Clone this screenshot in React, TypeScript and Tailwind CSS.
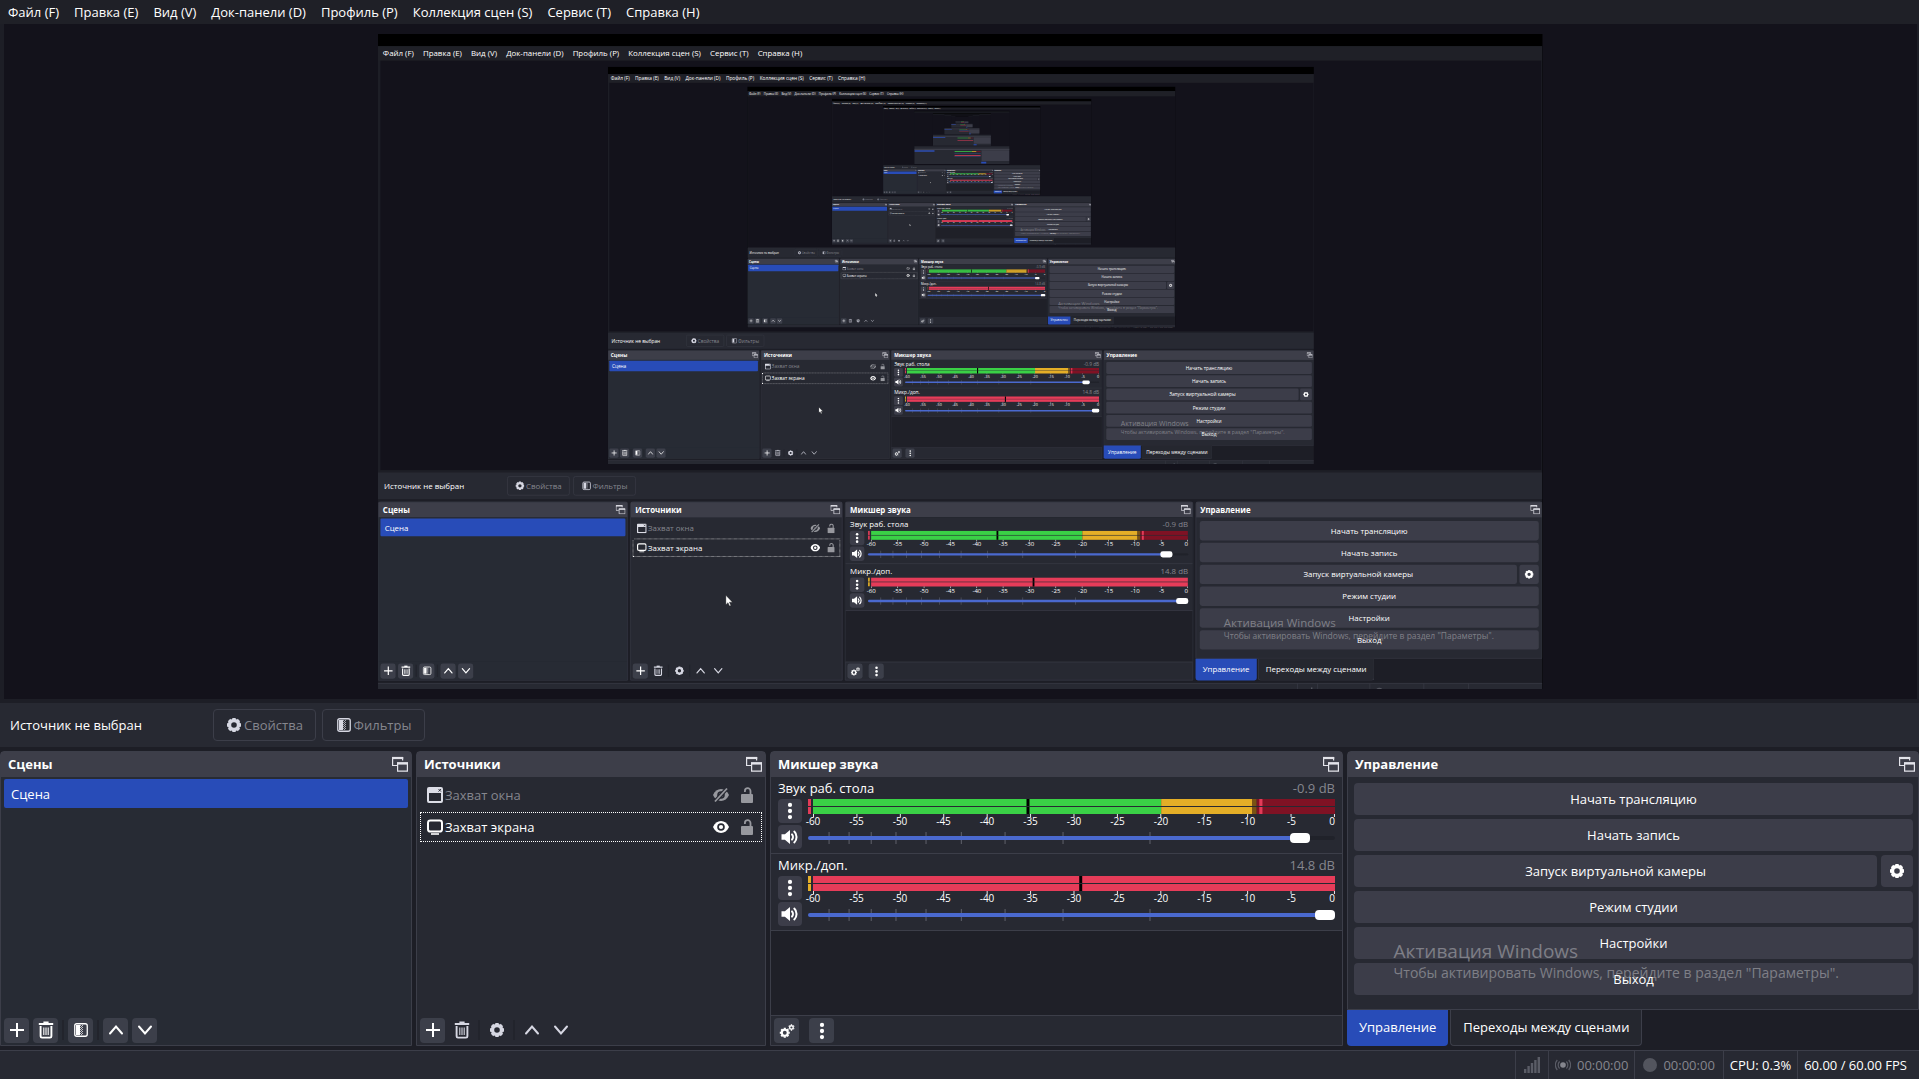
import { useId, useLayoutEffect, useRef, useState, type ReactNode } from "react";

const SCREEN_W = 1920;
const SCREEN_H = 1080;
const MAX_DEPTH = 5;

const MENU = [
  "Файл (F)",
  "Правка (E)",
  "Вид (V)",
  "Док-панели (D)",
  "Профиль (P)",
  "Коллекция сцен (S)",
  "Сервис (T)",
  "Справка (H)",
];

const DB_LABELS = [-60, -55, -50, -45, -40, -35, -30, -25, -20, -15, -10, -5, 0];
const VOLUME_TICKS = [3.9, 7.7, 11.9, 16.6, 22.3, 29, 37.3, 48.3, 64.8];

// peak hold position of the desktop channel, one entry per mirrored frame
const DESKTOP_HOLD = [40.9, 39.6, 36.5];

/* ---------- icons ---------- */

function GearIcon({ className = "size-4" }: { className?: string }) {
  return (
    <svg viewBox="0 0 16 16" className={className} stroke="currentColor" fill="none" aria-hidden="true">
      <circle cx="8" cy="8" r="4.5" strokeWidth="3.4" />
      {[0, 45, 90, 135].map((a) => (
        <g key={a} transform={`rotate(${a} 8 8)`} strokeWidth="3.4">
          <path d="M8 1v2M8 13v2" />
        </g>
      ))}
    </svg>
  );
}

function GearsIcon() {
  return (
    <svg viewBox="0 0 18 18" className="size-4" stroke="currentColor" fill="none" aria-hidden="true">
      <circle cx="6.5" cy="11" r="3.4" strokeWidth="2.4" />
      {[0, 45, 90, 135].map((a) => (
        <path key={a} transform={`rotate(${a} 6.5 11)`} strokeWidth="2.4" d="M6.5 5.4v1.6M6.5 15v1.6" />
      ))}
      <circle cx="14" cy="5" r="2" strokeWidth="1.6" />
      {[0, 60, 120].map((a) => (
        <path key={a} transform={`rotate(${a} 14 5)`} strokeWidth="1.5" d="M14 1.4v1.2M14 7.4v1.2" />
      ))}
    </svg>
  );
}

function FilterIcon() {
  return (
    <svg viewBox="0 0 16 16" className="size-4" fill="currentColor" aria-hidden="true">
      <rect x="1.75" y="1.75" width="12.5" height="12.5" rx="2" fill="none" stroke="currentColor" strokeWidth="1.3" />
      <path d="M3 3h4v10H3z" />
      {[3, 5, 7, 9, 11].map((y) => (
        <path key={y} d={`M7 ${y}h1v1H7zM8 ${y + 1}h1v1H8zM9 ${y}h1v1H9z`} opacity=".7" />
      ))}
    </svg>
  );
}

function FloatIcon() {
  return (
    <svg viewBox="0 0 16 16" className="size-4" fill="none" stroke="currentColor" aria-hidden="true">
      <path d="M5 9.5H.6V1.5h10v3" strokeWidth="1.2" />
      <path d="M0 2h11.2" strokeWidth="2.2" />
      <path d="M5.6 7h9.8v8.2H5.6z" strokeWidth="1.2" />
      <path d="M5 7.4h11" strokeWidth="2.4" />
    </svg>
  );
}

function TrashIcon() {
  return (
    <svg viewBox="0 0 16 18" className="h-[18px] w-4" fill="none" stroke="currentColor" aria-hidden="true">
      <path d="M.8 3h14.4M5.4 1.4h5.2" strokeWidth="2" />
      <path d="M2.6 5v10.2a1.4 1.4 0 0 0 1.4 1.4h8a1.4 1.4 0 0 0 1.4-1.4V5" strokeWidth="1.9" />
      <path d="M5.8 6.5v7.5M8 6.5v7.5M10.2 6.5v7.5" strokeWidth="1.1" />
    </svg>
  );
}

function PlusIcon() {
  return (
    <svg viewBox="0 0 16 16" className="size-4" stroke="currentColor" strokeWidth="2" aria-hidden="true">
      <path d="M8 1v14M1 8h14" />
    </svg>
  );
}

function ChevronIcon({ down }: { down?: boolean }) {
  return (
    <svg viewBox="0 0 16 16" className="size-4" fill="none" stroke="currentColor" strokeWidth="2" strokeLinecap="round" aria-hidden="true">
      <path d={down ? "M2 4.5l6 7 6-7" : "M2 11.5l6-7 6 7"} />
    </svg>
  );
}

function DotsIcon() {
  return (
    <svg viewBox="0 0 16 16" className="size-[18px]" fill="currentColor" aria-hidden="true">
      <circle cx="8" cy="2.6" r="1.9" />
      <circle cx="8" cy="8" r="1.9" />
      <circle cx="8" cy="13.4" r="1.9" />
    </svg>
  );
}

function SpeakerIcon() {
  return (
    <svg viewBox="0 0 18 16" className="h-4 w-[18px]" aria-hidden="true">
      <path d="M.5 5.2h3.4L9 1v14L3.9 10.8H.5z" fill="currentColor" />
      <path d="M11 5.4c1.3 1.4 1.3 3.8 0 5.2M13.3 2.6c3 2.8 3 8 0 10.8" fill="none" stroke="currentColor" strokeWidth="2" strokeLinecap="round" />
    </svg>
  );
}

function WindowIcon() {
  return (
    <svg viewBox="0 0 16 16" className="size-4" aria-hidden="true">
      <path fillRule="evenodd" fill="#dcdde6" d="M2 0h12a2 2 0 0 1 2 2v12a2 2 0 0 1-2 2H2a2 2 0 0 1-2-2V2a2 2 0 0 1 2-2zM2 6v7.4c0 .4.2.6.6.6h10.8c.4 0 .6-.2.6-.6V6z" />
      <path d="M11.5 2l2.5 2.6M14 2l-2.5 2.6" stroke="#272932" strokeWidth=".9" />
    </svg>
  );
}

function MonitorIcon() {
  return (
    <svg viewBox="0 0 16 16" className="size-4" fill="none" stroke="#fff" strokeWidth="2" aria-hidden="true">
      <rect x="1" y="1.6" width="14" height="11" rx="2.4" />
      <path d="M4 15h8" strokeWidth="1.6" />
    </svg>
  );
}

function EyeIcon({ off }: { off?: boolean }) {
  return (
    <svg viewBox="0 0 16 16" className="size-4" aria-hidden="true">
      <path d="M0 8c1.6-3.8 4.6-6 8-6s6.4 2.2 8 6c-1.6 3.8-4.6 6-8 6s-6.4-2.2-8-6z" fill="currentColor" />
      <circle cx="8" cy="8" r="3.8" fill="#272932" />
      <circle cx="8" cy="8" r="2.1" fill="currentColor" />
      {off && <path d="M1.5 15L14.5 1" stroke="#272932" strokeWidth="4" />}
      {off && <path d="M2 14.5L14 1.5" stroke="currentColor" strokeWidth="1.8" />}
    </svg>
  );
}

function UnlockIcon() {
  return (
    <svg viewBox="0 0 12 16" className="h-4 w-3" aria-hidden="true">
      <rect x="0" y="7" width="12" height="9" rx="1" fill="currentColor" />
      <path d="M9.5 7.5V4a2.8 2.8 0 0 0-5.6 0v1" fill="none" stroke="currentColor" strokeWidth="1.8" />
    </svg>
  );
}

/* ---------- shared bits ---------- */

function Dock({ title, children }: { title: string; children: ReactNode }) {
  return (
    <section className="flex min-h-0 min-w-0 flex-1 flex-col rounded-t border border-[#3c3e49] bg-[#272932]">
      <header className="flex h-[25px] shrink-0 items-center justify-between bg-[#3d3e49] pr-[3px] pb-0.5 pl-[7px]">
        <h2 className="font-bold">{title}</h2>
        <button type="button" aria-label={`Открепить: ${title}`} className="text-[#e3e3ea]">
          <FloatIcon />
        </button>
      </header>
      {children}
    </section>
  );
}

function ToolButton({ label, flat, children }: { label: string; flat?: boolean; children: ReactNode }) {
  return (
    <button
      type="button"
      aria-label={label}
      className={
        flat
          ? "flex size-[25px] items-center justify-center rounded text-[#d6d7e2]"
          : "flex size-[25px] items-center justify-center rounded bg-[#3c3f4a] text-white"
      }
    >
      {children}
    </button>
  );
}

function Separator() {
  return <span className="h-5 w-0.5 bg-[#22242c]" />;
}

/* ---------- docks ---------- */

function ScenesDock() {
  return (
    <Dock title="Сцены">
      <ul className="flex-1 bg-[#272b34] px-[3px] py-0.5">
        <li className="flex h-[29px] items-center rounded-xs bg-[#284cb8] px-[7px]">Сцена</li>
      </ul>
      <div className="flex h-[30px] items-center gap-1 bg-[#272b34] px-[3px]">
        <ToolButton label="Добавить сцену"><PlusIcon /></ToolButton>
        <ToolButton label="Удалить сцену"><TrashIcon /></ToolButton>
        <Separator />
        <ToolButton label="Фильтры сцены"><FilterIcon /></ToolButton>
        <Separator />
        <ToolButton label="Сцену вверх"><ChevronIcon /></ToolButton>
        <ToolButton label="Сцену вниз"><ChevronIcon down /></ToolButton>
      </div>
    </Dock>
  );
}

function SourceRow({ name, icon, visible }: { name: string; icon: ReactNode; visible?: boolean }) {
  return (
    <li
      className={
        visible
          ? "flex h-[30px] items-center gap-0.5 border border-dotted border-white pr-2 pl-1.5"
          : "flex h-[30px] items-center gap-0.5 border border-transparent pr-2 pl-1.5 text-[#85868e]"
      }
    >
      {icon}
      <span className="flex-1">{name}</span>
      <button type="button" aria-label={`Видимость: ${name}`} className={visible ? "mr-2.5 text-white" : "mr-2.5 text-[#97989e]"}>
        <EyeIcon off={!visible} />
      </button>
      <button type="button" aria-label={`Блокировка: ${name}`} className="text-[#97989e]">
        <UnlockIcon />
      </button>
    </li>
  );
}

function SourcesDock() {
  return (
    <Dock title="Источники">
      <ul className="flex flex-1 flex-col gap-0.5 p-[3px]">
        <SourceRow name="Захват окна" icon={<WindowIcon />} />
        <SourceRow name="Захват экрана" icon={<MonitorIcon />} visible />
      </ul>
      <div className="flex h-[30px] items-center gap-1 px-[3px]">
        <ToolButton label="Добавить источник"><PlusIcon /></ToolButton>
        <ToolButton label="Удалить источник" flat><TrashIcon /></ToolButton>
        <Separator />
        <ToolButton label="Свойства источника" flat><GearIcon /></ToolButton>
        <Separator />
        <ToolButton label="Источник вверх" flat><ChevronIcon /></ToolButton>
        <ToolButton label="Источник вниз" flat><ChevronIcon down /></ToolButton>
      </div>
    </Dock>
  );
}

type Segment = { from: number; to: number; color: string };

type ChannelProps = {
  name: string;
  db: string;
  input: string;
  segments: Segment[];
  hold: number;
  volume: number;
};

function Channel({ name, db, input, segments, hold, volume }: ChannelProps) {
  const id = useId();

  return (
    <div className="border-b border-[#3c3e49] px-[7px] pt-px pb-1">
      <div className="flex h-[21px] items-start justify-between pt-0.5">
        <label htmlFor={id}>{name}</label>
        <span className="text-[#85868e]">{db}</span>
      </div>
      <div className="flex gap-1.5">
        <div className="flex flex-col gap-0.5">
          <button type="button" aria-label={`Параметры: ${name}`} className="flex size-6 items-center justify-center rounded bg-[#3c3d49]">
            <DotsIcon />
          </button>
          <button type="button" aria-label={`Заглушить: ${name}`} className="flex size-6 items-center justify-center rounded bg-[#3c3d49]">
            <SpeakerIcon />
          </button>
        </div>

        <div className="min-w-0 flex-1">
          {/* Level meter */}
          <div className="flex gap-0.5">
            <svg className="h-[15px] w-[3px]">
              <rect width="3" height="7" fill={input} />
              <rect y="8" width="3" height="7" fill={input} />
            </svg>
            <div className="flex-1">
              <svg className="block h-[18px] w-full">
                {segments.map((s) => (
                  <rect key={s.from} x={`${s.from}%`} width={`${s.to - s.from}%`} height="15" fill={s.color} />
                ))}
                <rect x={`${hold}%`} width="3" height="15" fill="#000" />
                <rect y="7" width="100%" height="1" fill="#272932" />
                {DB_LABELS.map((v) => (
                  <rect key={v} x={`${((v + 60) / 60) * 99.8}%`} y="15" width="1" height="3" fill="#e8e8ee" />
                ))}
              </svg>
              <div className="flex h-2 items-center justify-between text-[10px] leading-none">
                {DB_LABELS.map((v) => (
                  <span key={v} className={v === 0 ? "flex w-0 justify-end" : "flex w-0 justify-center"}>
                    {v}
                  </span>
                ))}
              </div>
            </div>
          </div>

          {/* Volume */}
          <div className="relative h-6">
            <svg className="absolute inset-0 h-full w-full">
              {VOLUME_TICKS.map((t) => (
                <rect key={t} x={`${t}%`} y="7" width="1" height="12" fill="#5f616b" />
              ))}
            </svg>
            <input
              id={id}
              type="range"
              min={0}
              max={100}
              defaultValue={volume}
              style={{ backgroundImage: `linear-gradient(to right, #4a69cf ${volume}%, #20222a ${volume}%)` }}
              className="absolute inset-x-0 top-[11px] h-1 w-full appearance-none rounded-full [&::-webkit-slider-thumb]:h-2.5 [&::-webkit-slider-thumb]:w-5 [&::-webkit-slider-thumb]:appearance-none [&::-webkit-slider-thumb]:rounded [&::-webkit-slider-thumb]:bg-white"
            />
          </div>
        </div>
      </div>
    </div>
  );
}

function MixerDock({ depth }: { depth: number }) {
  const hold = DESKTOP_HOLD[Math.min(depth, DESKTOP_HOLD.length - 1)];

  return (
    <Dock title="Микшер звука">
      <div className="flex-1 bg-[#1f2028]">
        <div className="bg-[#272932]">
          <Channel
            name="Звук раб. стола"
            db="-0.9 dB"
            input="#e33b58"
            hold={hold}
            volume={95}
            segments={[
              { from: 0, to: 66.7, color: "#3ad046" },
              { from: 66.7, to: 84.1, color: "#e4ae27" },
              { from: 84.1, to: 85, color: "#7a5214" },
              { from: 85, to: 100, color: "#7f1224" },
              { from: 85.5, to: 86.1, color: "#e33b58" },
            ]}
          />
          <Channel
            name="Микр./доп."
            db="14.8 dB"
            input="#e4ae27"
            hold={51}
            volume={100}
            segments={[{ from: 0, to: 100, color: "#e63c59" }]}
          />
        </div>
      </div>
      <div className="flex h-[30px] items-center gap-2.5 border-t border-[#3c3e49] px-[3px]">
        <ToolButton label="Дополнительные свойства аудио"><GearsIcon /></ToolButton>
        <ToolButton label="Меню микшера"><DotsIcon /></ToolButton>
      </div>
    </Dock>
  );
}

function ControlButton({ children }: { children: ReactNode }) {
  return (
    <button type="button" className="h-8 min-w-0 flex-1 shrink-0 rounded bg-[#3c3d49]">
      {children}
    </button>
  );
}

function ControlsDock() {
  return (
    <div className="flex min-w-0 flex-col">
      <Dock title="Управление">
        <div className="flex flex-col gap-1 py-1.5 pr-[5px] pl-1.5">
          <div className="flex"><ControlButton>Начать трансляцию</ControlButton></div>
          <div className="flex"><ControlButton>Начать запись</ControlButton></div>
          <div className="flex gap-1">
            <ControlButton>Запуск виртуальной камеры</ControlButton>
            <button type="button" aria-label="Настроить виртуальную камеру" className="flex size-8 items-center justify-center rounded bg-[#3c3d49]">
              <GearIcon />
            </button>
          </div>
          <div className="flex"><ControlButton>Режим студии</ControlButton></div>
          <div className="flex"><ControlButton>Настройки</ControlButton></div>
          <div className="flex"><ControlButton>Выход</ControlButton></div>
        </div>
      </Dock>
      <div className="flex h-9 shrink-0 gap-0.5">
        <button type="button" className="rounded-b bg-[#284cb8] px-3 pb-0.5">Управление</button>
        <button type="button" className="rounded-b border border-t-0 border-[#3c3e49] bg-[#25272f] px-3 pb-px">
          Переходы между сценами
        </button>
      </div>
    </div>
  );
}

/* ---------- window ---------- */

function Cursor() {
  return (
    <svg viewBox="0 0 12 19" className="absolute top-[905px] left-[573px] h-[19px] w-3" aria-hidden="true">
      <path d="M.5.5v15.500l3.600-3.400 2.500 5.700 2.300-1-2.500-5.500h5z" fill="#fff" stroke="#222" strokeWidth=".6" />
    </svg>
  );
}

// the innermost frames are only a few pixels high, so they are drawn as plain blocks
function TinyFrame({ left }: { left: number }) {
  return (
    <g>
      <path d="M0 0h1920v1080H0z" fill="#13121b" />
      <path d="M0 0h1920v20H0z" fill="#000" />
      <path d="M0 20h1920v24H0z" fill="#1f2027" />
      <path d="M0 722h1920v358H0z" fill="#272932" />
      <path d="M0 771h1920v26H0z" fill="#3d3e49" />
      <path d="M4 799h404v30H4z" fill="#2f4fb4" />
      <path d="M813 819h348v15H813z" fill="#3ad046" />
      <path d="M1161 819h91v15h-91z" fill="#e4ae27" />
      <path d="M1252 819h83v15h-83z" fill="#7f1224" />
      <path d="M813 896h522v15H813z" fill="#e63c59" />
      <path d="M808 856h527v4H808zM808 933h527v4H808z" fill="#4a69cf" />
      <path d="M1354 803h559v212h-559z" fill="#3c3d49" />
      <path d="M1347 1030h101v35h-101z" fill="#284cb8" />
      {left > 0 && (
        <g transform="translate(378 54) scale(.606)">
          <TinyFrame left={left - 1} />
        </g>
      )}
    </g>
  );
}

function Preview({ depth }: { depth: number }) {
  const ref = useRef<HTMLDivElement>(null);
  const [scale, setScale] = useState(0.6);

  useLayoutEffect(() => {
    const el = ref.current;
    if (!el) return;
    const fit = () =>
      setScale(Math.min((el.clientHeight - 20) / SCREEN_H, (el.clientWidth - 20) / SCREEN_W));
    fit();
    const observer = new ResizeObserver(fit);
    observer.observe(el);
    return () => observer.disconnect();
  }, []);

  return (
    <div ref={ref} className="mr-0.5 ml-1 flex min-h-0 flex-1 items-center justify-center overflow-hidden bg-[#13121b]">
      <div className="shrink-0 overflow-hidden" style={{ width: SCREEN_W * scale, height: SCREEN_H * scale }}>
        {depth < MAX_DEPTH ? (
          <div
            inert
            aria-hidden="true"
            className="flex origin-top-left flex-col overflow-hidden bg-black pt-5"
            style={{ width: SCREEN_W, height: SCREEN_H, transform: `scale(${scale})` }}
          >
            <div className="shrink-0" style={{ height: SCREEN_H - 1 }}>
              <StudioWindow depth={depth + 1} />
            </div>
          </div>
        ) : (
          <svg viewBox="0 0 1920 1080" className="h-full w-full" aria-hidden="true">
            <TinyFrame left={4} />
          </svg>
        )}
      </div>
    </div>
  );
}

function StatusBar() {
  return (
    <footer className="flex h-[29px] shrink-0 justify-end border-t border-[#3c3e49] bg-[#272932] text-[#85868e]">
      <div className="flex items-center border-l border-[#3c3e49] px-2">
        <svg viewBox="0 0 16 16" className="size-4" fill="#5a5c66" aria-hidden="true">
          <path d="M0 12h2.400v4H0zM3.400 9h2.400v7H3.400zM6.800 6h2.400v10H6.800zM10.200 3h2.400v13h-2.400zM13.600 0H16v16h-2.400z" />
        </svg>
      </div>
      <div className="flex items-center gap-1.5 border-l border-[#3c3e49] px-1.5">
        <svg viewBox="0 0 16 16" className="size-4" fill="none" stroke="#5a5c66" strokeWidth="1.200" aria-hidden="true">
          <circle cx="8" cy="8" r="2.800" fill="#85868e" stroke="none" />
          <path d="M4.600 4.500a5 5 0 0 0 0 7M11.400 4.500a5 5 0 0 1 0 7M2.300 3a7.500 7.500 0 0 0 0 10M13.700 3a7.500 7.500 0 0 1 0 10" />
        </svg>
        00:00:00
      </div>
      <div className="flex items-center gap-1.5 border-l border-[#3c3e49] px-2">
        <span className="size-3.5 rounded-full bg-[#53555e]" />
        00:00:00
      </div>
      <div className="flex items-center border-l border-[#3c3e49] px-1.5 text-white">CPU: 0.3%</div>
      <div className="flex items-center border-l border-[#3c3e49] pr-3 pl-1.5 text-white">60.00 / 60.00 FPS</div>
    </footer>
  );
}

function StudioWindow({ depth }: { depth: number }) {
  return (
    <div className="relative flex h-full flex-col overflow-hidden bg-[#1d1e26] font-['Open_Sans','Noto_Sans',sans-serif] text-[13px] leading-4 text-white">
      <nav className="flex h-6 shrink-0 items-center gap-[15px] bg-[#1f2027] px-2">
        {MENU.map((item) => (
          <button key={item} type="button">{item}</button>
        ))}
      </nav>

      <Preview depth={depth} />

      <div className="mt-1 flex h-11 shrink-0 items-center gap-1.5 bg-[#272932] pl-2.5">
        <span className="w-[197px]">Источник не выбран</span>
        <button type="button" className="flex h-8 w-[103px] items-center justify-center gap-0.5 rounded border border-[#3c3e49] text-[#85868e]">
          <span className="text-[#d6d7e2]"><GearIcon /></span>
          Свойства
        </button>
        <button type="button" className="flex h-8 w-[103px] items-center justify-center gap-0.5 rounded border border-[#3c3e49] text-[#85868e]">
          <span className="text-[#d6d7e2]"><FilterIcon /></span>
          Фильтры
        </button>
      </div>

      <main className="my-1 grid h-[295px] shrink-0 grid-cols-[412fr_350fr_573fr_572fr] gap-1">
        <ScenesDock />
        <SourcesDock />
        <MixerDock depth={depth} />
        <ControlsDock />
      </main>

      <StatusBar />

      {/* Activation watermark */}
      <div className="pointer-events-none absolute right-20 bottom-24 text-white/35">
        <p className="text-[19px] leading-6">Активация Windows</p>
        <p className="text-sm leading-5">Чтобы активировать Windows, перейдите в раздел "Параметры".</p>
      </div>

      {depth > 0 && <Cursor />}
    </div>
  );
}

export default function App() {
  return (
    <div className="h-screen">
      <StudioWindow depth={0} />
    </div>
  );
}
